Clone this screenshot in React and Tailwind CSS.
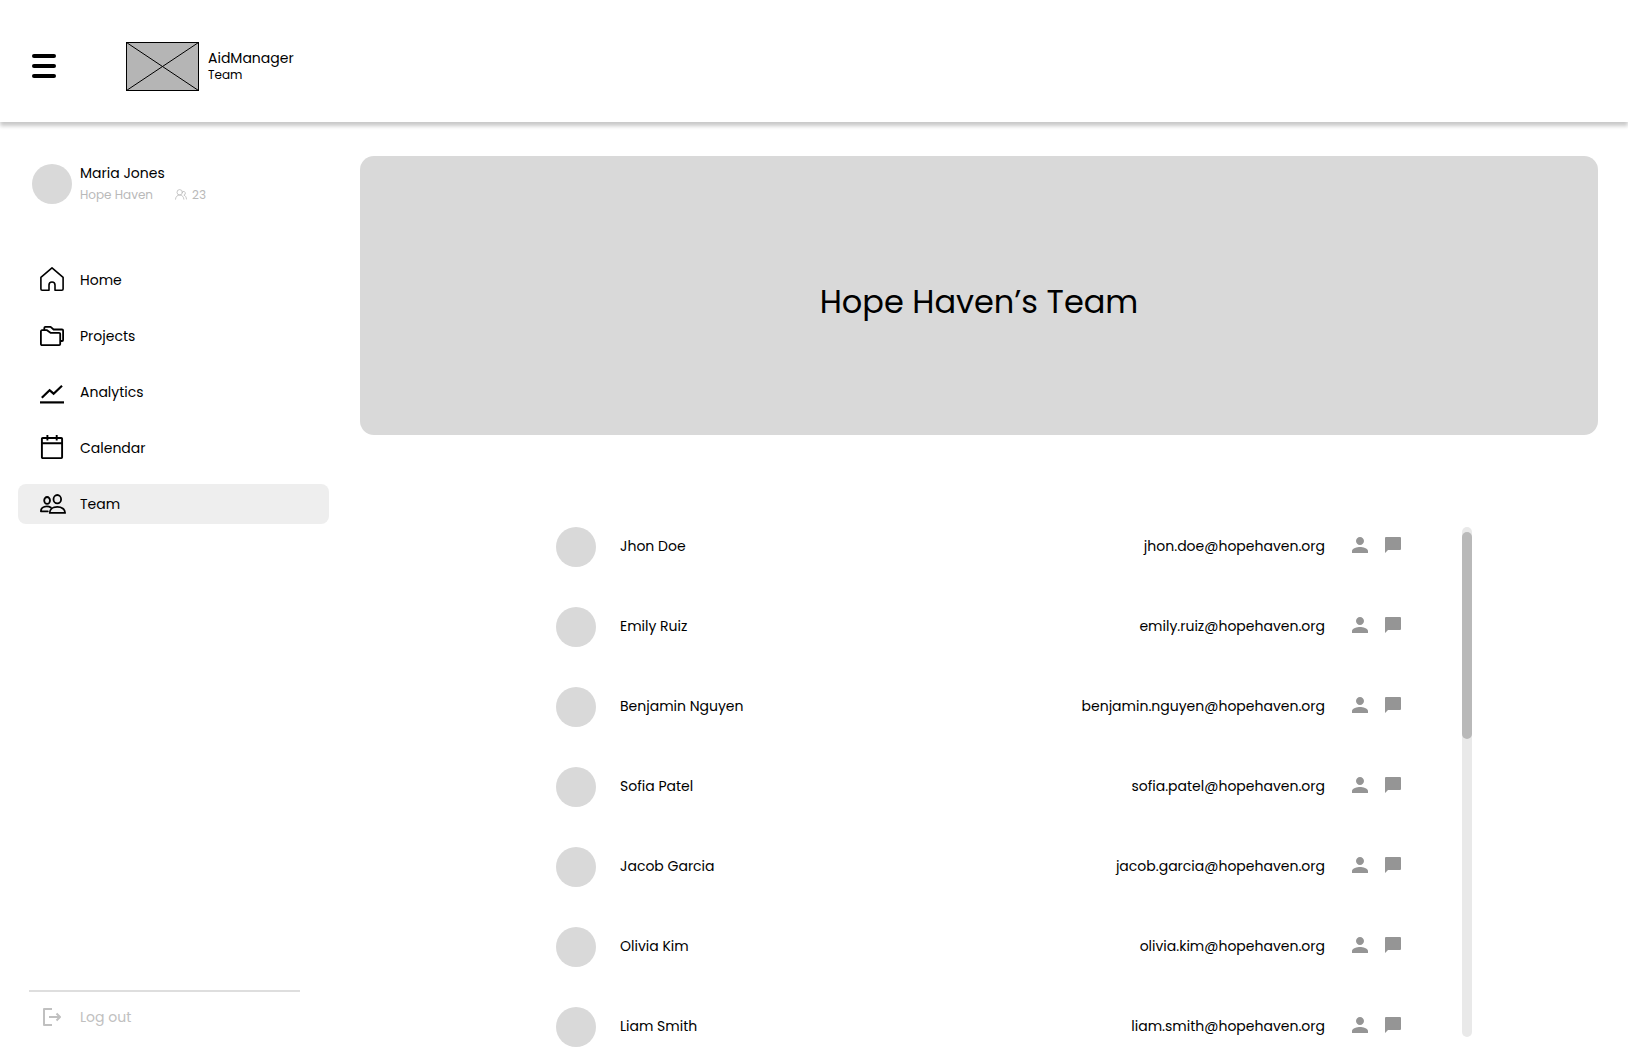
const members = [
  { name: "Jhon Doe", email: "jhon.doe@hopehaven.org" },
  { name: "Emily Ruiz", email: "emily.ruiz@hopehaven.org" },
  { name: "Benjamin Nguyen", email: "benjamin.nguyen@hopehaven.org" },
  { name: "Sofia Patel", email: "sofia.patel@hopehaven.org" },
  { name: "Jacob Garcia", email: "jacob.garcia@hopehaven.org" },
  { name: "Olivia Kim", email: "olivia.kim@hopehaven.org" },
  { name: "Liam Smith", email: "liam.smith@hopehaven.org" },
];

function HomeIcon() {
  return (
    <svg className="h-[26px] w-6" viewBox="0 0 24 26" fill="none" stroke="currentColor" strokeWidth="1.6" strokeLinejoin="round" strokeLinecap="round" aria-hidden="true">
      <path d="M.9 10.4 12 .9l11.100 9.500V22a1.200 1.200 0 0 1-1.200 1.200H15V18a3 3 0 0 0-6 0v5.200H2.100A1.200 1.200 0 0 1 .9 22z" />
    </svg>
  );
}

function ProjectsIcon() {
  return (
    <svg className="h-5 w-6" viewBox="0 0 24 20" fill="none" stroke="currentColor" strokeWidth="1.8" strokeLinejoin="round" aria-hidden="true">
      <path d="M.9 5.300A1.100 1.100 0 0 1 2 4.200h5l3.500 2.600h8.600a1.100 1.100 0 0 1 1.100 1.100v10.100a1.100 1.100 0 0 1-1.100 1.100H2A1.100 1.100 0 0 1 .9 18z" />
      <path d="M4.300 4.200V2a1.100 1.100 0 0 1 1.100-1.100h5.200l3 2.600H22a1.100 1.100 0 0 1 1.100 1.100v9.300A1.100 1.100 0 0 1 22 15h-1.800" />
    </svg>
  );
}

function AnalyticsIcon() {
  return (
    <svg className="size-6" viewBox="0 0 24 24" fill="none" stroke="currentColor" strokeWidth="2.200" aria-hidden="true">
      <path d="m1.800 17.800 7.800-7.600 4 3.500L22 5.800" />
      <path d="M0 22.400h24" />
    </svg>
  );
}

function CalendarIcon() {
  return (
    <svg className="h-[26px] w-6" viewBox="0 0 24 26" fill="none" stroke="currentColor" strokeWidth="1.900" strokeLinejoin="round" aria-hidden="true">
      <rect x="1.900" y="3" width="20.200" height="20.100" rx=".8" />
      <path d="M1.900 8.200h20.200M7.400 0v5.600M16.700 0v5.600" />
    </svg>
  );
}

function TeamIcon() {
  return (
    <svg className="h-5 w-[26px]" viewBox="0 0 26 20" fill="none" stroke="currentColor" strokeWidth="1.800" strokeLinejoin="round" strokeLinecap="round" aria-hidden="true">
      <ellipse cx="7.100" cy="6.400" rx="2.900" ry="3.400" />
      <ellipse cx="17.300" cy="5.200" rx="3.800" ry="4.200" />
      <path d="M9.700 18.900c0-3.600 3.200-6 7.600-6s7.800 2.400 7.800 6z" />
      <path d="M7.800 17.300H.9c0-3 2.500-4.900 5.900-4.900 1.600 0 2.900.3 4 1" />
    </svg>
  );
}

function MembersIcon() {
  return (
    <svg className="size-3" viewBox="0 0 12 12" fill="none" stroke="currentColor" strokeWidth=".8" strokeLinecap="round" aria-hidden="true">
      <circle cx="4.700" cy="3.300" r="2.700" />
      <path d="M.5 10.200C.7 7.800 2.300 6 4.700 6s4 1.800 4.200 4.200" />
      <path d="M8 2.400a1.900 1.900 0 0 1 .9 3.700c1.500.6 2.500 2 2.600 3.900" />
    </svg>
  );
}

function LogoutIcon() {
  return (
    <svg className="size-[18px]" viewBox="0 0 18 18" fill="none" stroke="currentColor" strokeWidth="2" strokeLinejoin="round" aria-hidden="true">
      <path d="M9 1H1v16h8" />
      <path d="M6 9h11M13.500 5.500 17 9l-3.500 3.500" />
    </svg>
  );
}

function PersonIcon() {
  return (
    <svg className="size-4" viewBox="4 4 16 16" fill="currentColor" aria-hidden="true">
      <path d="M12 12c2.210 0 4-1.790 4-4s-1.790-4-4-4-4 1.790-4 4 1.790 4 4 4zm0 2c-2.670 0-8 1.340-8 4v2h16v-2c0-2.660-5.330-4-8-4z" />
    </svg>
  );
}

function ChatIcon() {
  return (
    <svg className="size-4" viewBox="0 0 16 16" fill="currentColor" aria-hidden="true">
      <path d="M1 0h14a1 1 0 0 1 1 1v11a1 1 0 0 1-1 1H3l-3 3V1a1 1 0 0 1 1-1z" />
    </svg>
  );
}

const links = [
  { label: "Home", Icon: HomeIcon },
  { label: "Projects", Icon: ProjectsIcon },
  { label: "Analytics", Icon: AnalyticsIcon },
  { label: "Calendar", Icon: CalendarIcon },
  { label: "Team", Icon: TeamIcon, active: true },
];

function Header() {
  return (
    <header className="relative flex items-center bg-white px-8 pt-[42px] pb-[31px] shadow-[0_4px_4px_rgba(0,0,0,0.22)]">
      <button type="button" aria-label="Menu" className="flex w-6 flex-col gap-1.5 pb-px">
        <span className="h-1 rounded-full bg-black" />
        <span className="h-1 rounded-full bg-black" />
        <span className="h-1 rounded-full bg-black" />
      </button>
      <svg className="ml-[70px] h-[49px] w-[73px]" viewBox="0 0 73 49" fill="#b5b5b5" stroke="black" role="img" aria-label="Logo">
        <rect x=".5" y=".5" width="72" height="48" />
        <path d="m.5.5 72 48M72.500.5l-72 48" />
      </svg>
      <div className="ml-[9px] flex flex-col gap-px">
        <p className="text-sm leading-4">AidManager</p>
        <p className="text-xs leading-4">Team</p>
      </div>
    </header>
  );
}

function Sidebar() {
  return (
    <aside className="flex w-[329px] shrink-0 flex-col pt-[41px] pb-6 pl-[18px]">
      <div className="flex items-start gap-2 pl-3.5">
        <div className="mt-px size-10 rounded-full bg-[#d9d9d9]" />
        <div>
          <p className="text-sm leading-5">Maria Jones</p>
          <div className="flex items-center text-[#b9b9b9]">
            <span className="w-[95px] text-xs leading-6">Hope Haven</span>
            <MembersIcon />
            <span className="ml-[5px] text-xs leading-6">23</span>
          </div>
        </div>
      </div>
      <nav className="mt-[53px] flex flex-col gap-4">
        {links.map(({ label, Icon, active }) => (
          <a
            key={label}
            href="#"
            aria-current={active ? "page" : undefined}
            className={`flex h-10 items-center rounded-lg pl-[22px] text-sm ${active ? "bg-[#eeeeee]" : ""}`}
          >
            <span className="flex w-10">
              <Icon />
            </span>
            {label}
          </a>
        ))}
      </nav>
      <div className="mt-auto mr-[29px] ml-[11px] border-t-2 border-[#dedede] pt-[13px]">
        <button type="button" className="flex items-center pl-3.5 text-sm leading-6 text-[#c0c0c0]">
          <span className="flex w-[37px]">
            <LogoutIcon />
          </span>
          Log out
        </button>
      </div>
    </aside>
  );
}

function MemberRow({ name, email }) {
  return (
    <li className="flex h-10 items-center">
      <div className="size-10 rounded-full bg-[#d9d9d9]" />
      <div className="ml-6 flex grow justify-between pb-0.5 text-sm">
        <span>{name}</span>
        <a href={`mailto:${email}`}>{email}</a>
      </div>
      <div className="ml-[27px] flex gap-[17px] pb-1 text-[#959595]">
        <button type="button" aria-label={`Profile of ${name}`}>
          <PersonIcon />
        </button>
        <button type="button" aria-label={`Message ${name}`}>
          <ChatIcon />
        </button>
      </div>
    </li>
  );
}

export default function App() {
  return (
    <div className="flex min-h-screen flex-col bg-white font-[Poppins,Inter,sans-serif] text-black">
      <Header />
      <div className="flex grow">
        <Sidebar />
        <main className="flex grow flex-col pt-[34px] pr-[30px] pb-1.5 pl-[31px]">
          <section className="flex h-[279px] items-center justify-center rounded-[14px] bg-[#d9d9d9] pt-3">
            <h1 className="text-[32px]">Hope Haven’s Team</h1>
          </section>
          <section className="mt-[92px] flex pr-[126px] pl-[196px]">
            <ul className="flex grow flex-col gap-10">
              {members.map((member) => (
                <MemberRow key={member.email} {...member} />
              ))}
            </ul>
            <div className="mb-2.5 ml-[61px] w-2.5 rounded-full bg-[#e9e9e9] pt-[5px]">
              <div className="h-[207px] rounded-full bg-[#b9b9b9]" />
            </div>
          </section>
        </main>
      </div>
    </div>
  );
}
